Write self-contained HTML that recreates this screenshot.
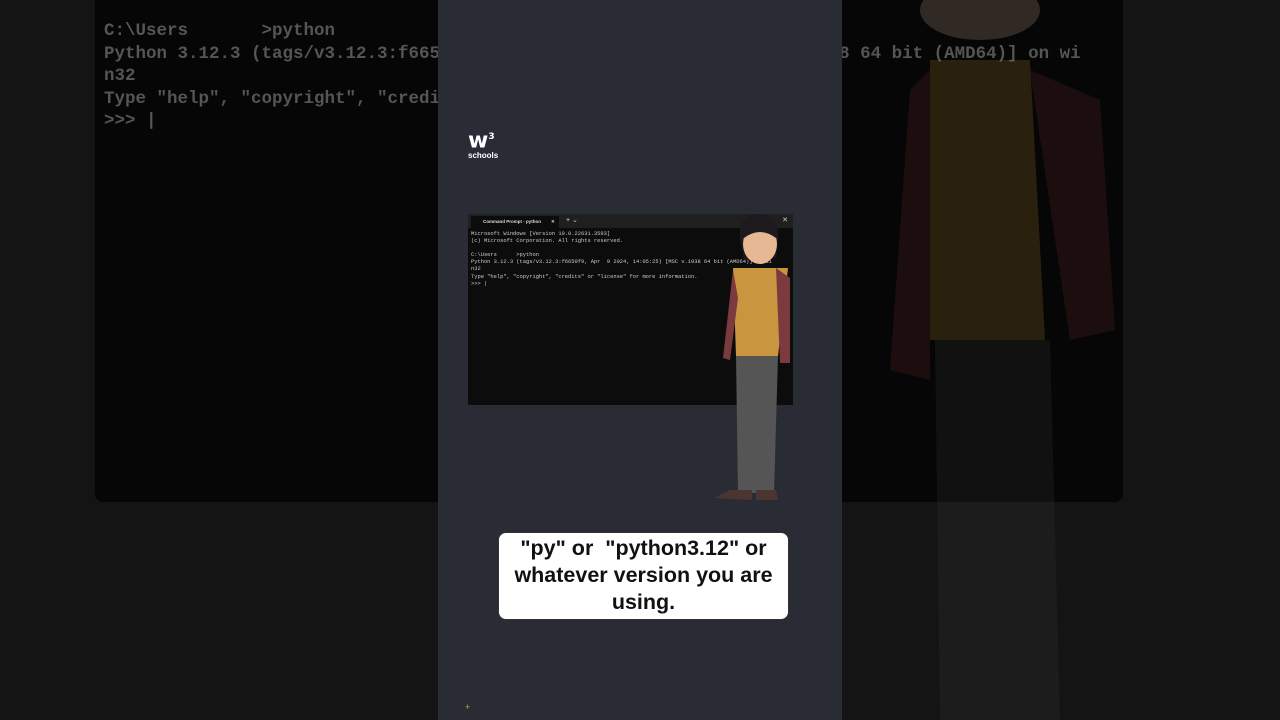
<!DOCTYPE html>
<html><head><meta charset="utf-8"><style>
*{margin:0;padding:0;box-sizing:border-box}
body{width:1280px;height:720px;background:#141414;position:relative;overflow:hidden;font-family:"Liberation Sans",sans-serif}
.bgp{position:absolute;left:95px;top:-10px;width:1028px;height:512px;background:#060606;border-radius:8px}
.bgt{position:absolute;left:104px;top:20px;font-family:"Liberation Mono",monospace;font-weight:bold;font-size:17.5px;line-height:22.5px;color:#555;white-space:pre}
.col{position:absolute;left:438px;top:0;width:404px;height:720px;background:#292c35}
.term{position:absolute;left:468px;top:214px;width:325px;height:191px;background:#0c0c0c}
.tbar{height:14px;background:#1f1f1f;position:relative}
.tab{position:absolute;left:3px;top:2px;width:88px;height:12px;background:#0c0c0c;font-size:4.5px;color:#ddd;padding:3px 0 0 12px;font-weight:bold;white-space:nowrap}
.tt{position:absolute;left:3px;top:17px;font-family:"Liberation Mono",monospace;font-size:5.4px;line-height:7.1px;color:#ccc;white-space:pre}
.cap{position:absolute;left:498px;top:532px;width:291px;height:88px;background:#fff;border-radius:8px;text-align:center;font-size:21.5px;line-height:27px;color:#111;padding-top:2px;font-weight:bold;border:1px solid #333}
.logo{position:absolute;left:468px;top:127px;color:#fff;font-weight:bold}
</style></head><body>
<div class="bgp"></div>
<div class="bgt">C:\Users       >python
Python 3.12.3 (tags/v3.12.3:f6650f9, Apr  9 2024, 14:05:25) [MSC v.1938 64 bit (AMD64)] on wi
n32
Type "help", "copyright", "credits" or "license" for more information.
>>> |</div>
<svg style="position:absolute;left:870px;top:0" width="260" height="720">
<g opacity="0.22">
<ellipse cx="110" cy="10" rx="60" ry="30" fill="#c9a58a"/>
<path d="M60 60 L160 60 L175 340 L60 340 Z" fill="#a97b2c"/>
<path d="M40 90 L60 70 L60 380 L20 370 Z" fill="#6b2b30"/>
<path d="M160 70 L230 100 L245 330 L200 340 Z" fill="#6b2b30"/>
<path d="M65 340 L180 340 L190 720 L70 720 Z" fill="#3a3a3a"/>
</g></svg>
<div class="col"></div>
<div class="logo"><div style="font-size:22px;line-height:20px;font-family:'DejaVu Sans',sans-serif">w<sup style="font-size:9px">3</sup></div><div style="font-size:8px">schools</div></div>
<div class="term"><div class="tbar"><div class="tab">Command Prompt - python &nbsp;&nbsp;&nbsp;&nbsp;&nbsp;&nbsp; ✕</div><span style="position:absolute;left:98px;top:2px;color:#ccc;font-size:7px">+ ⌄</span><span style="position:absolute;right:5px;top:2px;color:#ccc;font-size:7px">✕</span></div>
<div class="tt">Microsoft Windows [Version 10.0.22631.3593]
(c) Microsoft Corporation. All rights reserved.

C:\Users      >python
Python 3.12.3 (tags/v3.12.3:f6650f9, Apr  9 2024, 14:05:25) [MSC v.1938 64 bit (AMD64)] on wi
n32
Type "help", "copyright", "credits" or "license" for more information.
>>> |</div></div>
<svg style="position:absolute;left:708px;top:208px" width="90" height="300">
<path d="M32 30 Q30 5 52 6 Q72 8 70 30 L68 50 L36 52 Z" fill="#1c1a1c"/>
<ellipse cx="52" cy="36" rx="17" ry="20" fill="#e6b894"/>
<path d="M34 22 Q50 2 70 22 L68 30 Q52 18 36 30 Z" fill="#1c1a1c"/>
<path d="M25 60 L80 60 L70 148 L28 148 Z" fill="#c9953f"/>
<path d="M25 62 L15 150 L22 152 L30 90 Z" fill="#7a3a3e"/>
<path d="M68 60 L82 70 L82 155 L72 155 Z" fill="#7a3a3e"/>
<path d="M28 148 L70 148 L66 285 L30 285 Z" fill="#555"/>
<path d="M22 282 L44 282 L44 292 L6 290 Z M48 282 L68 282 L70 292 L48 292 Z" fill="#4a3530"/>
</svg>
<div class="cap">"py" or &nbsp;"python3.12" or<br>whatever version you are<br>using.</div>
<div style="position:absolute;left:465px;top:702px;color:#c9a040;font-size:9px">+</div>
</body></html>
